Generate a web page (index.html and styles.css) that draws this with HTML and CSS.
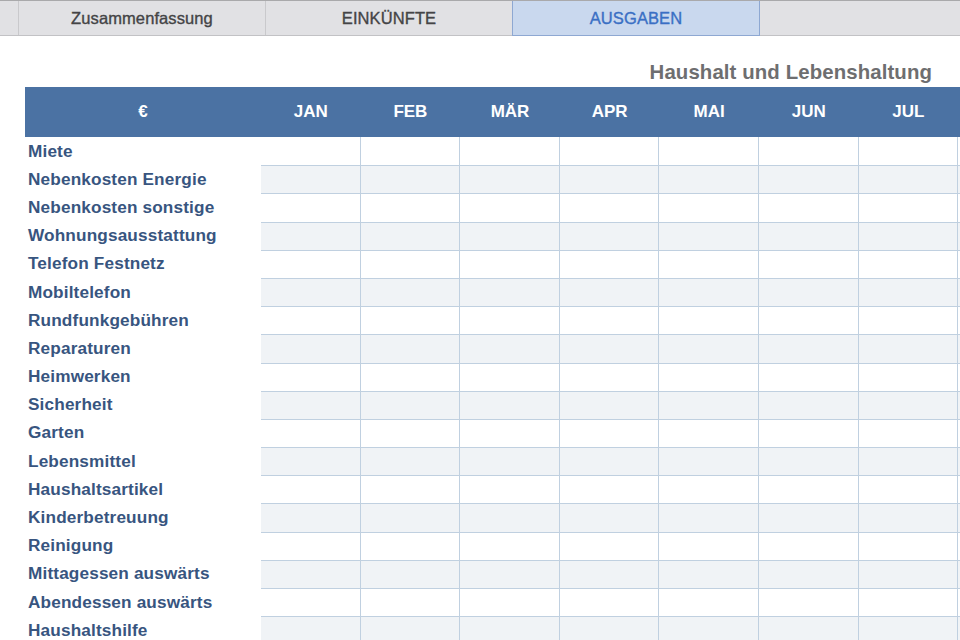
FILE: index.html
```html
<!DOCTYPE html>
<html lang="de">
<head>
<meta charset="utf-8">
<title>Ausgaben</title>
<link rel="stylesheet" href="styles.css">
</head>
<body>
<nav class="tabs">
  <div class="tab-spacer"></div>
  <div class="tab">Zusammenfassung</div>
  <div class="tab">EINKÜNFTE</div>
  <div class="tab active">AUSGABEN</div>
  <div class="tab-rest"></div>
</nav>
<main class="sheet">
  <h1 class="title">Haushalt und Lebenshaltung</h1>
  <div class="table">
    <div class="row head">
      <div class="hcell">€</div>
      <div class="hcell">JAN</div>
      <div class="hcell">FEB</div>
      <div class="hcell">MÄR</div>
      <div class="hcell">APR</div>
      <div class="hcell">MAI</div>
      <div class="hcell">JUN</div>
      <div class="hcell">JUL</div>
      <div class="hcell"></div>
    </div>
    <div class="row"><div class="label">Miete</div><div class="cell"></div><div class="cell"></div><div class="cell"></div><div class="cell"></div><div class="cell"></div><div class="cell"></div><div class="cell"></div><div class="cell"></div></div>
    <div class="row alt"><div class="label">Nebenkosten Energie</div><div class="cell"></div><div class="cell"></div><div class="cell"></div><div class="cell"></div><div class="cell"></div><div class="cell"></div><div class="cell"></div><div class="cell"></div></div>
    <div class="row"><div class="label">Nebenkosten sonstige</div><div class="cell"></div><div class="cell"></div><div class="cell"></div><div class="cell"></div><div class="cell"></div><div class="cell"></div><div class="cell"></div><div class="cell"></div></div>
    <div class="row alt"><div class="label">Wohnungsausstattung</div><div class="cell"></div><div class="cell"></div><div class="cell"></div><div class="cell"></div><div class="cell"></div><div class="cell"></div><div class="cell"></div><div class="cell"></div></div>
    <div class="row"><div class="label">Telefon Festnetz</div><div class="cell"></div><div class="cell"></div><div class="cell"></div><div class="cell"></div><div class="cell"></div><div class="cell"></div><div class="cell"></div><div class="cell"></div></div>
    <div class="row alt"><div class="label">Mobiltelefon</div><div class="cell"></div><div class="cell"></div><div class="cell"></div><div class="cell"></div><div class="cell"></div><div class="cell"></div><div class="cell"></div><div class="cell"></div></div>
    <div class="row"><div class="label">Rundfunkgebühren</div><div class="cell"></div><div class="cell"></div><div class="cell"></div><div class="cell"></div><div class="cell"></div><div class="cell"></div><div class="cell"></div><div class="cell"></div></div>
    <div class="row alt"><div class="label">Reparaturen</div><div class="cell"></div><div class="cell"></div><div class="cell"></div><div class="cell"></div><div class="cell"></div><div class="cell"></div><div class="cell"></div><div class="cell"></div></div>
    <div class="row"><div class="label">Heimwerken</div><div class="cell"></div><div class="cell"></div><div class="cell"></div><div class="cell"></div><div class="cell"></div><div class="cell"></div><div class="cell"></div><div class="cell"></div></div>
    <div class="row alt"><div class="label">Sicherheit</div><div class="cell"></div><div class="cell"></div><div class="cell"></div><div class="cell"></div><div class="cell"></div><div class="cell"></div><div class="cell"></div><div class="cell"></div></div>
    <div class="row"><div class="label">Garten</div><div class="cell"></div><div class="cell"></div><div class="cell"></div><div class="cell"></div><div class="cell"></div><div class="cell"></div><div class="cell"></div><div class="cell"></div></div>
    <div class="row alt"><div class="label">Lebensmittel</div><div class="cell"></div><div class="cell"></div><div class="cell"></div><div class="cell"></div><div class="cell"></div><div class="cell"></div><div class="cell"></div><div class="cell"></div></div>
    <div class="row"><div class="label">Haushaltsartikel</div><div class="cell"></div><div class="cell"></div><div class="cell"></div><div class="cell"></div><div class="cell"></div><div class="cell"></div><div class="cell"></div><div class="cell"></div></div>
    <div class="row alt"><div class="label">Kinderbetreuung</div><div class="cell"></div><div class="cell"></div><div class="cell"></div><div class="cell"></div><div class="cell"></div><div class="cell"></div><div class="cell"></div><div class="cell"></div></div>
    <div class="row"><div class="label">Reinigung</div><div class="cell"></div><div class="cell"></div><div class="cell"></div><div class="cell"></div><div class="cell"></div><div class="cell"></div><div class="cell"></div><div class="cell"></div></div>
    <div class="row alt"><div class="label">Mittagessen auswärts</div><div class="cell"></div><div class="cell"></div><div class="cell"></div><div class="cell"></div><div class="cell"></div><div class="cell"></div><div class="cell"></div><div class="cell"></div></div>
    <div class="row"><div class="label">Abendessen auswärts</div><div class="cell"></div><div class="cell"></div><div class="cell"></div><div class="cell"></div><div class="cell"></div><div class="cell"></div><div class="cell"></div><div class="cell"></div></div>
    <div class="row alt"><div class="label">Haushaltshilfe</div><div class="cell"></div><div class="cell"></div><div class="cell"></div><div class="cell"></div><div class="cell"></div><div class="cell"></div><div class="cell"></div><div class="cell"></div></div>
  </div>
</main>
</body>
</html>
```

FILE: styles.css
```css
html, body {
  margin: 0;
  padding: 0;
  background: #ffffff;
  overflow: hidden;
  width: 960px;
  height: 640px;
}

body {
  font-family: "Liberation Sans", Arial, sans-serif;
}

.tabs {
  display: flex;
  height: 34px;
  background: #e1e1e4;
  border-top: 1px solid #a9a9ab;
  border-bottom: 1px solid #c2c2c5;
}

.tab-spacer {
  width: 18px;
  border-right: 1px solid #c9c9cc;
}

.tab {
  width: 246px;
  display: flex;
  align-items: center;
  justify-content: center;
  font-size: 16.5px;
  color: #444446;
  border-right: 1px solid #c9c9cc;
  letter-spacing: 0.1px;
  -webkit-text-stroke: 0.35px currentColor;
}

.tab.active {
  background: #c9d8ee;
  color: #3a6fc4;
  border-left: 1px solid #8ea8d2;
  border-right: 1px solid #8ea8d2;
  border-bottom: 1px solid #8ea8d2;
  margin-left: -1px;
  margin-bottom: -1px;
}

.tab-rest {
  flex: 1;
}

.sheet {
  padding: 25px 0 0 25px;
}

.title {
  margin: 0 28px 4px 0;
  text-align: right;
  font-size: 20.4px;
  line-height: 22px;
  font-weight: bold;
  color: #6e6e70;
  letter-spacing: 0.1px;
}

.row {
  display: grid;
  grid-template-columns: 236px repeat(8, 99.6px);
  height: 28.2px;
}

.row.head {
  height: 50px;
  background: #4b72a3;
}

.hcell {
  display: flex;
  align-items: center;
  justify-content: center;
  color: #ffffff;
  font-weight: bold;
  font-size: 17px;
}

.label {
  display: flex;
  align-items: center;
  padding-left: 3px;
  font-weight: bold;
  font-size: 17.2px;
  color: #38557f;
  letter-spacing: 0.15px;
  white-space: nowrap;
}

.cell {
  border-right: 1px solid #c0d0e0;
}

.row:not(.head) + .row .cell {
  border-top: 1px solid #c0d0e0;
}

.row.alt .cell {
  background: #f0f3f6;
}
```
